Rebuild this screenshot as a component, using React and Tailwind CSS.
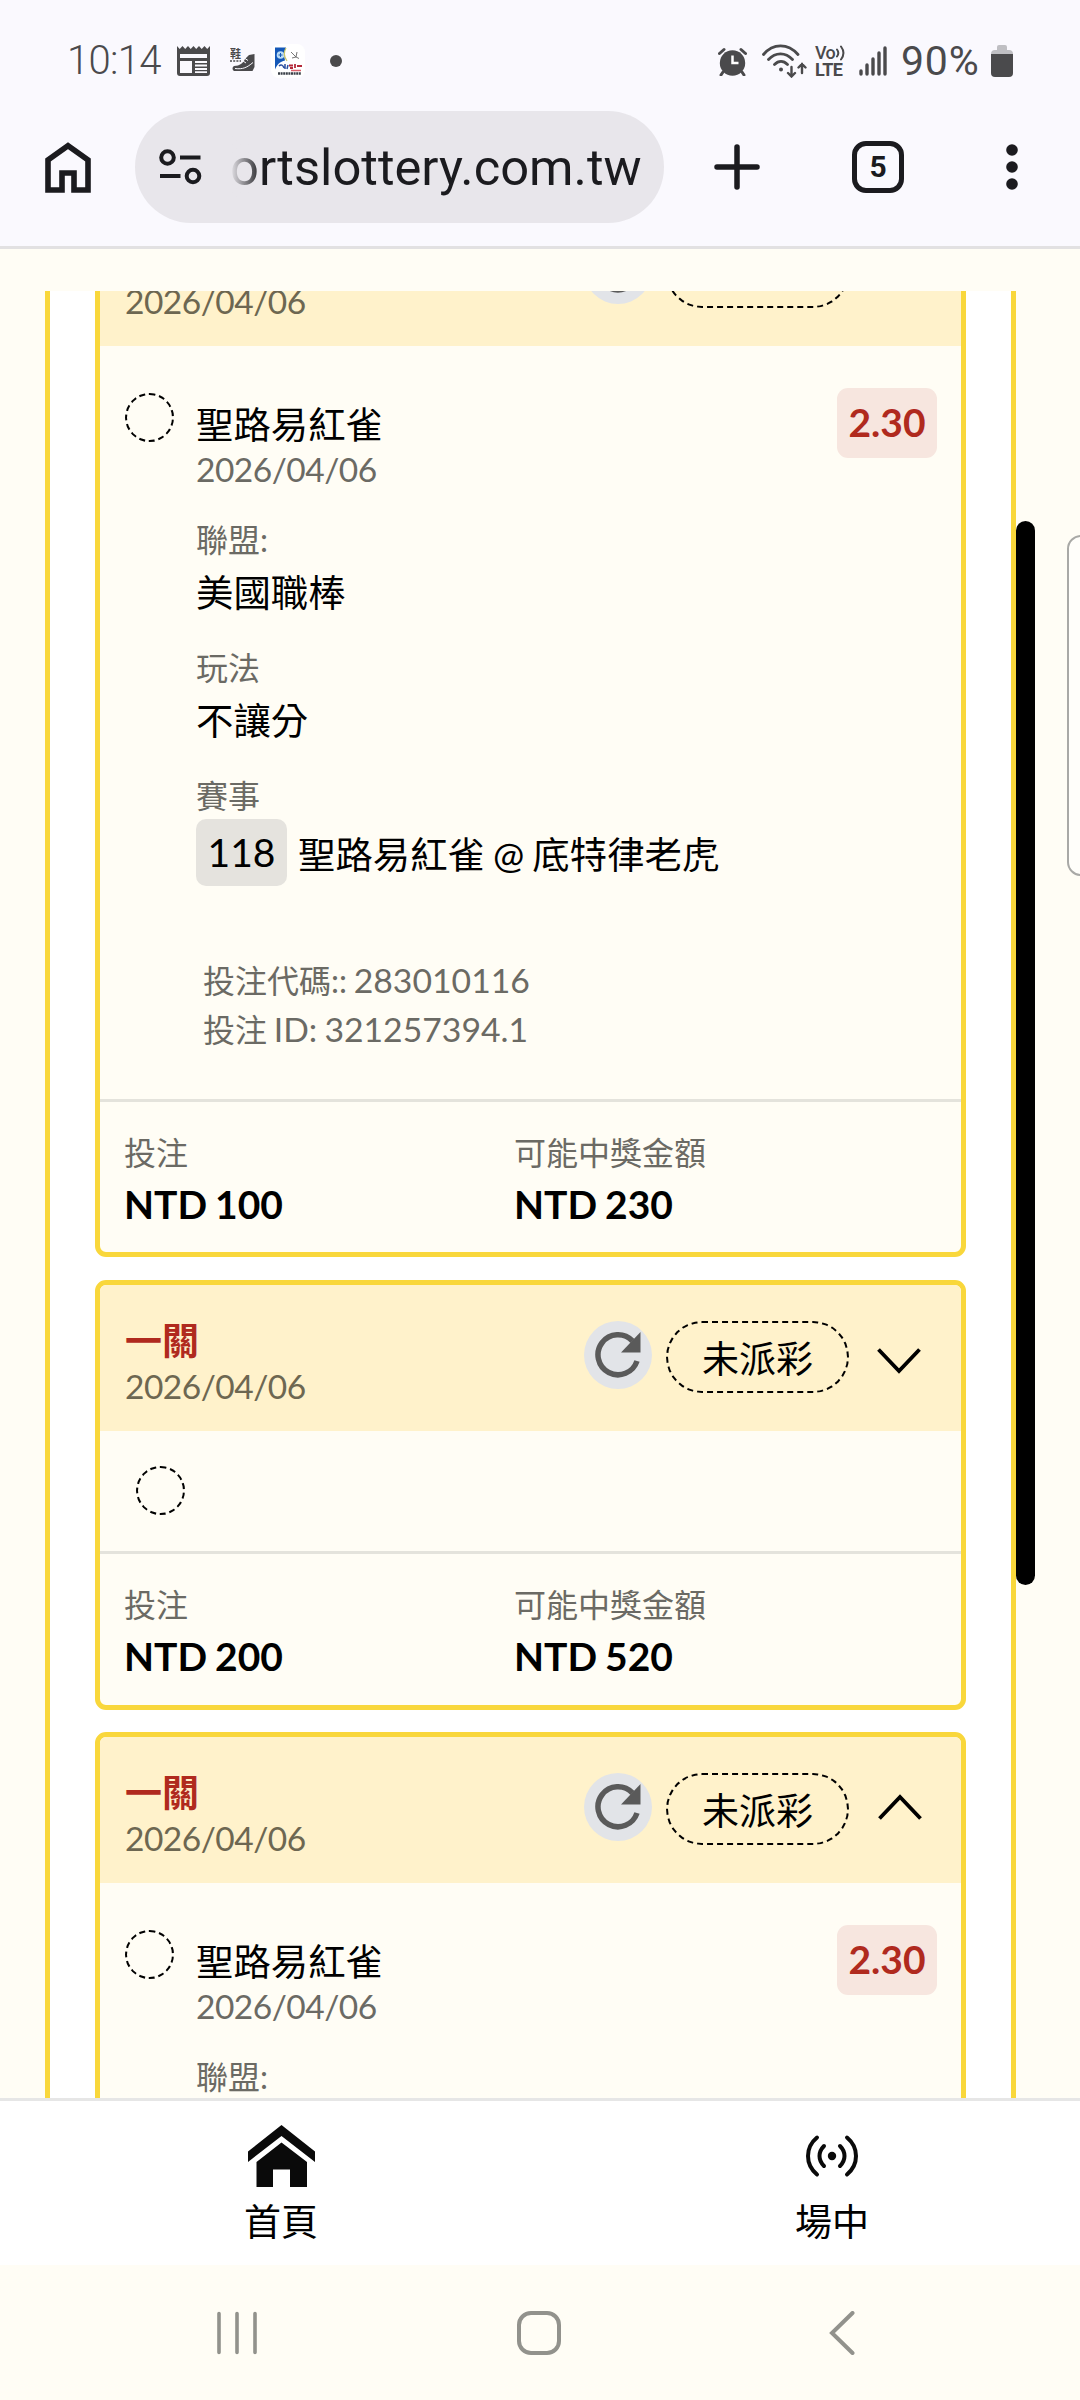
const TICKETS = [
  { id: 1, date: '2026/04/06', open: true, stake: 'NTD 100', payout: 'NTD 230' },
  { id: 2, date: '2026/04/06', open: false, stake: 'NTD 200', payout: 'NTD 520' },
  { id: 3, date: '2026/04/06', open: true, stake: 'NTD 100', payout: 'NTD 230' },
];

function StatusBar() {
  return (
    <div className="h-[88px] flex items-start justify-between pl-[67px] pr-[67px] pt-[36px] text-[#4a4a4c]">
      <div className="flex items-center h-[50px]">
        <span className="w-[110px] font-['Roboto'] font-[350] text-[40px] leading-[50px] tracking-[-0.7px]">10:14</span>
        <svg className="w-[33px] h-[30px]" viewBox="0 0 33 30">
          <path d="M0 0l2.7 3 2.8-3 2.7 3 2.8-3 2.7 3 2.8-3 2.7 3 2.8-3 2.7 3 2.8-3 2.7 3L33 0v27a3 3 0 0 1-3 3H3a3 3 0 0 1-3-3z" fill="#4a4a4c" />
          <path d="M3 8h27v4H3zM3 15h12v12H3zM18 15h12v2H18zM18 18.6h12v2H18zM18 22h12v2H18zM18 25.3h12v1.7H18z" fill="#faf9fe" />
        </svg>
        <svg className="ml-[20px] w-[25px] h-[26px]" viewBox="0 0 25 26">
          <text x="0" y="10" fontSize="11" fontWeight="700" fill="#4a4a4c">鞋</text>
          <path d="M0 13h11" stroke="#4a4a4c" strokeWidth="1.6" strokeDasharray="2 1.2" />
          <path d="M24.500 6v13l-2 4H4c-2-1-2-4 0-5 6 0 9-3 11-7l4-4z" fill="#4a4a4c" />
          <path d="M13 13l3 2M15 10.500l3 2M5 20.500c8 1 12-1 18-6" stroke="#faf9fe" strokeWidth="1" fill="none" />
        </svg>
        <svg className="ml-[16px] w-[34px] h-[34px]" viewBox="0 0 34 34">
          <rect width="34" height="34" rx="8" fill="#fff" />
          <path d="M4 3.500h11c-2 4-2 9-1 13-5 1-8 4-10 9z" fill="#1458b8" />
          <circle cx="9.500" cy="11" r="3.800" fill="#b9dcf6" />
          <path d="M7.500 11h4M9.500 9v4" stroke="#1458b8" strokeWidth="1" />
          <path d="M15 4c-3 5-2 9 1 13" stroke="#c9c56a" strokeWidth="1.200" fill="none" />
          <path d="M20 8l5 5 3 1.500M21 14l4-1M26 8l-1 5" stroke="#666" strokeWidth=".9" fill="none" />
          <path d="M8 22c2-2 4-1 5 2M14 20v5M17 21l-1 4" stroke="#2b4fa0" strokeWidth="1.500" fill="none" />
          <path d="M18 21.500h4M19 24h3M24 20v4M26 22h5" stroke="#b52a3a" strokeWidth="1.800" fill="none" />
          <path d="M20 26.500h10" stroke="#d9606a" strokeWidth="1.500" />
          <path d="M7 29.500h23" stroke="#3a4048" strokeWidth="2.500" strokeDasharray="2 .6" />
        </svg>
        <span className="ml-[25px] w-[12px] h-[12px] rounded-full bg-[#4a4a4c]" />
      </div>
      <div className="flex items-center h-[50px]">
        <svg className="w-[29px] h-[29px]" viewBox="0 0 29 29">
          <circle cx="14.500" cy="16" r="12.700" fill="#4a4a4c" />
          <path d="M1.500 6.500l4.500-4M27.500 6.500l-4.500-4" stroke="#4a4a4c" strokeWidth="3" strokeLinecap="round" />
          <path d="M5 25l-2 3M24 25l2 3" stroke="#4a4a4c" strokeWidth="3" strokeLinecap="round" />
          <path d="M14.500 8.500V16h6" stroke="#fff" strokeWidth="2.500" fill="none" />
        </svg>
        <svg className="ml-[15px] w-[45px] h-[34px]" viewBox="0 0 45 34" fill="none" stroke="#4a4a4c" strokeWidth="2.800" strokeLinecap="round">
          <path d="M1.500 10.500C11-1 26-1 36 10.500M6.500 15.500c7-7.500 17-7.500 24 0M12.500 20.500c4-4 9-4 13 0" />
          <circle cx="19" cy="25.500" r="2" fill="#4a4a4c" stroke="none" />
          <path d="M29.500 23v9M26 29l3.500 3.500L33 29M40 29v-9M36.500 23.500L40 20l3.500 3.500" strokeWidth="2.400" />
        </svg>
        <div className="ml-[8px] w-[32px] flex flex-col font-['Roboto'] font-medium">
          <div className="flex items-center h-[16px]">
            <span className="text-[18px] leading-[16px] tracking-[-0.6px]">Vo</span>
            <svg className="w-[11px] h-[16px]" viewBox="0 0 11 16" fill="none" stroke="#4a4a4c" strokeWidth="2" strokeLinecap="round">
              <path d="M2 4.500c1.500 2 1.500 5 0 7M6 1.500c3 4 3 9 0 13" />
            </svg>
          </div>
          <span className="text-[18px] leading-[17px] tracking-[-0.6px] font-bold">LTE</span>
        </div>
        <svg className="ml-[12px] w-[28px] h-[30px]" viewBox="0 0 28 30" stroke="#4a4a4c" strokeWidth="3.400" strokeLinecap="round">
          <path d="M2 25v3M8 19v9M14 13v15M20 7v21M26 2v26" />
        </svg>
        <span className="ml-[14px] w-[90px] font-['Roboto'] font-normal text-[41px] leading-[50px] tracking-[0.8px] whitespace-nowrap">90%</span>
        <svg className="w-[22px] h-[32px]" viewBox="0 0 22 32">
          <path d="M6 2a2 2 0 0 1 2-2h6a2 2 0 0 1 2 2v3h2a4 4 0 0 1 4 4v2H0V9a4 4 0 0 1 4-4h2z" fill="#bfbfc3" />
          <path d="M0 9h22v19a4 4 0 0 1-4 4H4a4 4 0 0 1-4-4z" fill="#4a4a4c" />
        </svg>
      </div>
    </div>
  );
}

function Toolbar() {
  return (
    <div className="h-[158px] pt-[23px] flex items-start">
      <div className="flex items-center h-[112px] w-full">
        <svg className="ml-[45px] w-[46px] h-[51px]" viewBox="0 0 46 51" fill="none" stroke="#1b1b1f" strokeWidth="5.600">
          <path d="M3 48V18L23 3.800 43 18v30H29V31H17v17z" />
        </svg>
        <div className="ml-[44px] w-[529px] h-[112px] rounded-full bg-[#e8e6eb] flex items-center">
          <svg className="ml-[24px] w-[43px] h-[36px]" viewBox="0 0 43 36" fill="none" stroke="#1b1b1f" strokeWidth="4">
            <circle cx="8.500" cy="8.500" r="6.300" />
            <circle cx="34" cy="27" r="6.300" />
            <path d="M21 8.500h20.500M1 27h20.500" />
          </svg>
          <div className="relative ml-[28px] pt-[2px] font-['Roboto'] text-[50.700px] leading-[60px] text-[#1b1b1f] whitespace-nowrap">
            ortslottery.com.tw
            <span className="absolute left-0 top-0 w-[32px] h-full bg-gradient-to-r from-[#e8e6eb] to-transparent" />
          </div>
        </div>
        <svg className="ml-[50px] w-[46px] h-[46px]" viewBox="0 0 46 46" stroke="#1b1b1f" strokeWidth="5.500" strokeLinecap="round">
          <path d="M23 3v40M3 23h40" />
        </svg>
        <div className="ml-[92px] w-[52px] h-[52px] rounded-[14px] border-[5.500px] border-[#1b1b1f] flex items-center justify-center font-['Roboto'] font-bold text-[30px] leading-none text-[#1b1b1f]">
          5
        </div>
        <svg className="ml-[102px] w-[12px] h-[46px]" viewBox="0 0 12 46" fill="#1b1b1f">
          <circle cx="6" cy="6" r="5.800" />
          <circle cx="6" cy="23" r="5.800" />
          <circle cx="6" cy="40" r="5.800" />
        </svg>
      </div>
    </div>
  );
}

function TicketHeader({ date, open }) {
  return (
    <div className="h-[146px] shrink-0 bg-[#fff2cb] flex items-start pl-[25px]">
      <div className="w-[459px] pt-[33px]">
        <div className="text-[37px] leading-[46px] font-bold text-[#b02a1e]">一關</div>
        <div className="text-[33.500px] leading-[44px] tracking-[-0.5px] text-[#6d6751]">{date}</div>
      </div>
      <div className="mt-[36px] w-[68px] h-[68px] rounded-full bg-[#e2e4e8] flex items-center justify-center">
        <svg className="w-[46px] h-[46px]" viewBox="0 0 46 46">
          <path d="M42 29a20 20 0 1 1-4.500-20" fill="none" stroke="#5a5a5a" strokeWidth="5.500" />
          <path d="M45.500 0v20.500H26z" fill="#5a5a5a" />
        </svg>
      </div>
      <div className="mt-[36px] ml-[14px] w-[183px] h-[72px] rounded-full border-2 border-dashed border-black flex items-center justify-center text-[37px] leading-[46px] text-black pt-[4px]">
        未派彩
      </div>
      {open ? (
        <svg className="mt-[57px] ml-[29px] w-[44px] h-[26px]" viewBox="0 0 44 26" fill="none" stroke="#000" strokeWidth="3.800">
          <path d="M1.500 24.500L22 3l20.500 21.500" />
        </svg>
      ) : (
        <svg className="mt-[63px] ml-[28px] w-[44px] h-[26px]" viewBox="0 0 44 26" fill="none" stroke="#000" strokeWidth="3.800">
          <path d="M1.500 1.500L22 23 42.500 1.500" />
        </svg>
      )}
    </div>
  );
}

function Field({ label, value }) {
  return (
    <div className="h-[128px]">
      <div className="text-[32px] leading-[48px] text-[#6b6a64]">{label}</div>
      <div className="text-[37.400px] leading-[58px] text-black">{value}</div>
    </div>
  );
}

function Selection() {
  return (
    <div className="h-[753px] shrink-0 flex items-start pl-[25px] pr-[24px] pt-[42px]">
      <div className="mt-[5px] w-[49px] h-[49px] rounded-full border-2 border-dashed border-black" />
      <div className="ml-[22px] flex-1 [word-spacing:-1.500px]">
        <div className="pt-[12px] text-[37.400px] leading-[50px] text-black">聖路易紅雀</div>
        <div className="-mt-[1px] text-[33.500px] leading-[40px] tracking-[-0.5px] text-[#6b6a64]">2026/04/06</div>
        <div className="mt-[27px]">
          <Field label="聯盟:" value="美國職棒" />
          <Field label="玩法" value="不讓分" />
          <div className="text-[32px] leading-[48px] text-[#6b6a64]">賽事</div>
        </div>
        <div className="-mt-[1px] flex items-center h-[67px]">
          <span className="w-[91px] h-[67px] rounded-[10px] bg-[#e5e3de] flex items-center justify-center text-[39px] leading-none text-black">118</span>
          <span className="ml-[11px] pt-[5px] text-[37.400px] leading-[50px] text-black whitespace-nowrap">聖路易紅雀 @ 底特律老虎</span>
        </div>
        <div className="mt-[70px] ml-[7px] text-[32px] leading-[49px] text-[#6b6a64]">
          <div>投注代碼:: <span className="text-[33.750px]">283010116</span></div>
          <div>投注 <span className="text-[33.750px]">ID: 321257394.1</span></div>
        </div>
      </div>
      <div className="w-[100px] h-[70px] pb-[1px] rounded-[11px] bg-[#f7e6df] flex items-center justify-center text-[39px] leading-none font-bold text-[#b02a1e]">
        2.30
      </div>
    </div>
  );
}

function Amount({ label, value, className }) {
  return (
    <div className={className}>
      <div className="text-[32px] leading-[50px] text-[#6b6a64]">{label}</div>
      <div className="text-[39px] leading-[52px] font-bold text-black [word-spacing:-1.500px]">{value}</div>
    </div>
  );
}

function Ticket({ ticket }) {
  return (
    <div className="shrink-0 rounded-[11px] border-[5px] border-[#f9d73b] bg-[#fffdf5] overflow-hidden flex flex-col">
      <TicketHeader date={ticket.date} open={ticket.open} />
      {ticket.open ? (
        <Selection />
      ) : (
        <div className="h-[120.500px] pl-[36px] pt-[35px]">
          <div className="w-[49px] h-[49px] rounded-full border-2 border-dashed border-black" />
        </div>
      )}
      <div className="h-[153.500px] shrink-0 border-t-[3px] border-[#e4e3dc] flex pl-[24px] pt-[26px]">
        <Amount label="投注" value={ticket.stake} className="w-[390px]" />
        <Amount label="可能中獎金額" value={ticket.payout} />
      </div>
    </div>
  );
}

function BottomNav() {
  return (
    <div className="h-[167px] shrink-0 bg-white border-t-[3px] border-[#e6e6e6] flex text-[37px] leading-[46px] text-black">
      <div className="ml-[181px] w-[200px] flex flex-col items-center pt-[24px]">
        <svg className="w-[67px] h-[62px]" viewBox="0 0 67 62" fill="#0a0a0a">
          <path d="M33.500 0L67 26.500V37L33.500 11 0 37V26.500z" />
          <path d="M33.500 17.500L59 37v25H42V44.500H25V62H8.500V37z" />
        </svg>
        <div className="mt-[12px]">首頁</div>
      </div>
      <div className="ml-[351px] w-[200px] flex flex-col items-center pt-[33px]">
        <svg className="w-[52px] h-[44px]" viewBox="0 0 52 44" fill="none" stroke="#0a0a0a" strokeWidth="4" strokeLinecap="round">
          <path d="M11 3.500c-12 10-12 27 0 37M41 3.500c12 10 12 27 0 37M18 12c-6 6-6 14 0 20M34 12c6 6 6 14 0 20" />
          <circle cx="26" cy="22" r="4.200" fill="#0a0a0a" stroke="none" />
        </svg>
        <div className="mt-[21px]">場中</div>
      </div>
    </div>
  );
}

function SystemNav() {
  return (
    <div className="h-[135px] shrink-0 bg-[#fffdf5] flex items-start pt-[46px]">
      <svg className="ml-[215px] w-[44px] h-[44px]" viewBox="0 0 44 44" stroke="#92928c" strokeWidth="3.600" strokeLinecap="round">
        <path d="M4 2.500v39M22 2.500v39M40 2.500v39" />
      </svg>
      <div className="ml-[258px] w-[44px] h-[44px] rounded-[14px] border-4 border-[#92928c]" />
      <svg className="ml-[268px] w-[26px] h-[44px]" viewBox="0 0 26 44" fill="none" stroke="#92928c" strokeWidth="4" strokeLinecap="round">
        <path d="M23.500 2L3 22l20.500 20" />
      </svg>
    </div>
  );
}

export default function App() {
  return (
    <div className="relative w-[1080px] h-[2400px] overflow-hidden flex flex-col bg-[#fffdf5] font-['Lato','Noto_Sans_CJK_TC',sans-serif]">
      <div className="h-[249px] shrink-0 bg-[#faf9fe] border-b-[3px] border-[#e2e1e2]">
        <StatusBar />
        <Toolbar />
      </div>

      {/* Scrolling ticket list, pinned part-way through the first ticket */}
      <div className="mt-[42px] ml-[45px] w-[971px] h-[1807px] shrink-0 overflow-hidden bg-white border-x-[5px] border-[#f9d73b] px-[45px]">
        <div className="-mt-[96.500px] flex flex-col gap-[22.500px]">
          {TICKETS.map((ticket) => (
            <Ticket key={ticket.id} ticket={ticket} />
          ))}
        </div>
      </div>

      <BottomNav />
      <SystemNav />

      {/* Scrollbar thumb and edge panel handle */}
      <div className="absolute left-[1016px] top-[521px] w-[19px] h-[1064px] rounded-full bg-black" />
      <div className="absolute left-[1067px] top-[535px] w-[30px] h-[341px] rounded-[14px] border-2 border-[#a9a9a6] bg-[#fffefa]" />
    </div>
  );
}
